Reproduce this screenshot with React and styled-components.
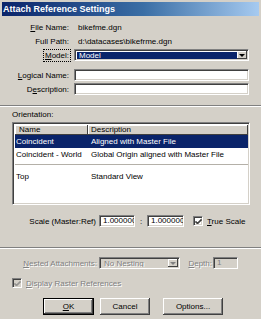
import React from "react";
import styled, { createGlobalStyle } from "styled-components";

const GlobalStyle = createGlobalStyle`
  html, body {
    margin: 0;
    padding: 0;
    background: #d4d0c8;
  }
  body {
    font-family: "Liberation Sans", Arial, sans-serif;
  }
`;

const Window = styled.div`
  width: 261px;
  height: 319px;
  background: #d4d0c8;
  font-size: 8px;
  color: #000;
  overflow: hidden;
  box-sizing: border-box;
  padding-top: 2px;
`;

const TitleBar = styled.div`
  height: 14px;
  margin: 0 2px;
  padding-left: 1px;
  background: linear-gradient(to right, #0a246a 0%, #3a6ea5 55%, #a6caf0 100%);
  color: #fff;
  font-weight: bold;
  font-size: 9px;
  line-height: 14px;
`;

const U = styled.span`
  text-decoration: underline;
`;

const Field = styled.div`
  display: flex;
  align-items: center;
  height: 12px;
  margin-top: ${(p) => p.top || 0}px;
`;

const Label = styled.div`
  width: ${(p) => p.w || 69}px;
  flex: none;
  text-align: right;
  white-space: nowrap;
  color: ${(p) => (p.disabled ? "#808080" : "#000")};
  text-shadow: ${(p) => (p.disabled ? "1px 1px 0 #fff" : "none")};
`;

const Focused = styled.span`
  outline: 1px dotted #000;
  outline-offset: 1px;
`;

const Value = styled.div`
  margin-left: 9px;
  white-space: nowrap;
`;

const sunken = `
  box-sizing: border-box;
  border: 1px solid;
  border-color: #808080 #fff #fff #808080;
  box-shadow: inset 1px 1px 0 #404040, inset -1px -1px 0 #d4d0c8;
`;

const TextBox = styled.div`
  ${sunken}
  margin-left: ${(p) => p.left || 0}px;
  width: ${(p) => p.w}px;
  height: 12px;
  background: ${(p) => (p.disabled ? "#d4d0c8" : "#fff")};
  color: ${(p) => (p.disabled ? "#808080" : "#000")};
  padding: 0 3px;
  line-height: 10px;
  overflow: hidden;
  white-space: nowrap;
`;

const Combo = styled.div`
  ${sunken}
  display: flex;
  align-items: stretch;
  margin-left: ${(p) => p.left || 0}px;
  width: ${(p) => p.w}px;
  height: 12px;
  padding: 2px 1px 1px 2px;
  background: ${(p) => (p.disabled ? "#d4d0c8" : "#fff")};
`;

const ComboText = styled.div`
  flex: 1;
  padding-left: 2px;
  line-height: 8px;
  background: ${(p) => (p.selected ? "#0a246a" : "transparent")};
  color: ${(p) => (p.selected ? "#fff" : p.disabled ? "#808080" : "#000")};
  text-shadow: ${(p) => (p.disabled ? "1px 1px 0 #fff" : "none")};
  white-space: nowrap;
  overflow: hidden;
`;

const ArrowButton = styled.div`
  width: 10px;
  flex: none;
  margin-top: -1px;
  background: #d4d0c8;
  box-shadow: inset -1px -1px 0 #404040, inset 1px 1px 0 #fff;
  display: flex;
  align-items: center;
  justify-content: center;

  &::after {
    content: "";
    border-left: 3px solid transparent;
    border-right: 3px solid transparent;
    border-top: 3px solid ${(p) => (p.disabled ? "#808080" : "#000")};
  }
`;

const Etched = styled.div`
  height: 0;
  border-top: 1px solid #808080;
  border-bottom: 1px solid #fff;
  margin-top: ${(p) => p.top}px;
`;

const Caption = styled.div`
  margin: 2px 0 0 12px;
  height: 12px;
  line-height: 12px;
`;

const List = styled.div`
  ${sunken}
  margin: 1px 0 0 12px;
  width: 238px;
  height: 83px;
  background: #fff;
  padding: 2px 1px 0 2px;
`;

const Grid = styled.div`
  display: grid;
  grid-template-columns: 73px 1fr;
`;

const HeadCell = styled.div`
  height: 10px;
  line-height: 10px;
  padding-left: ${(p) => p.pad}px;
  background: #d4d0c8;
  box-shadow: inset -1px -1px 0 #404040, inset 1px 1px 0 #fff;
  white-space: nowrap;
`;

const Cell = styled.div`
  height: 13px;
  line-height: 13px;
  padding-left: ${(p) => p.pad}px;
  background: ${(p) => (p.selected ? "#0a246a" : "transparent")};
  color: ${(p) => (p.selected ? "#fff" : "#000")};
  white-space: nowrap;
  overflow: hidden;
`;

const GroupLine = styled.div`
  grid-column: 1 / -1;
  height: 0;
  margin: 3px 0 5px;
  border-top: 1px solid #b4b0a8;
`;

const ScaleRow = styled.div`
  display: flex;
  align-items: center;
  height: 12px;
  margin-top: 10px;
`;

const Colon = styled.div`
  width: 12px;
  text-align: center;
`;

const Check = styled.div`
  ${sunken}
  width: 10px;
  height: 10px;
  flex: none;
  margin-left: ${(p) => p.left || 0}px;
  background: ${(p) => (p.disabled ? "#d4d0c8" : "#fff")};
  display: flex;
  align-items: center;
  justify-content: center;
`;

const CheckText = styled.div`
  margin-left: 4px;
  white-space: nowrap;
  color: ${(p) => (p.disabled ? "#808080" : "#000")};
  text-shadow: ${(p) => (p.disabled ? "1px 1px 0 #fff" : "none")};
`;

const RasterRow = styled.div`
  display: flex;
  align-items: center;
  height: 10px;
  margin: 9px 0 0 12px;
`;

const ButtonRow = styled.div`
  display: flex;
  margin: 10px 0 0 43px;
`;

const Button = styled.div`
  box-sizing: border-box;
  width: ${(p) => p.w}px;
  height: 17px;
  margin-left: ${(p) => p.left || 0}px;
  background: #d4d0c8;
  border: ${(p) => (p.primary ? "1px solid #000" : "none")};
  box-shadow: inset -1px -1px 0 #404040, inset 1px 1px 0 #fff,
    inset -2px -2px 0 #808080, inset 2px 2px 0 #d4d0c8;
  display: flex;
  align-items: center;
  justify-content: center;
`;

function Tick({ disabled }) {
  return (
    <svg width="7" height="7" viewBox="0 0 7 7">
      <path
        d="M0.5 3 L2.5 5 L6.5 1 M0.5 4 L2.5 6 L6.5 2"
        stroke={disabled ? "#808080" : "#000"}
        strokeWidth="1"
        fill="none"
      />
    </svg>
  );
}

export default function App() {
  return (
    <>
      <GlobalStyle />
      <Window>
        <TitleBar>Attach Reference Settings</TitleBar>

        <Field top={5}>
          <Label>
            <U>F</U>ile Name:
          </Label>
          <Value>bikefme.dgn</Value>
        </Field>
        <Field top={2}>
          <Label>Full Path:</Label>
          <Value>d:\datacases\bikefrme.dgn</Value>
        </Field>
        <Field top={2}>
          <Label>
            <Focused>
              <U>M</U>odel:
            </Focused>
          </Label>
          <Combo left={5} w={175}>
            <ComboText selected>Model</ComboText>
            <ArrowButton />
          </Combo>
        </Field>
        <Field top={8}>
          <Label>
            <U>L</U>ogical Name:
          </Label>
          <TextBox left={5} w={175} />
        </Field>
        <Field top={2}>
          <Label>
            D<U>e</U>scription:
          </Label>
          <TextBox left={5} w={175} />
        </Field>

        <Etched top={10} />

        <Caption>Orientation:</Caption>
        <List>
          <Grid>
            <HeadCell pad={4}>Name</HeadCell>
            <HeadCell pad={3}>Description</HeadCell>
            <Cell pad={1} selected>
              Coincident
            </Cell>
            <Cell pad={3} selected>
              Aligned with Master File
            </Cell>
            <Cell pad={1}>Coincident - World</Cell>
            <Cell pad={3}>Global Origin aligned with Master File</Cell>
            <GroupLine />
            <Cell pad={1}>Top</Cell>
            <Cell pad={3}>Standard View</Cell>
          </Grid>
        </List>

        <ScaleRow>
          <Label w={96}>Scale (Master:Ref)</Label>
          <TextBox left={3} w={36}>
            1.000000
          </TextBox>
          <Colon>:</Colon>
          <TextBox w={37}>1.000000</TextBox>
          <Check left={9}>
            <Tick />
          </Check>
          <CheckText>
            <U>T</U>rue Scale
          </CheckText>
        </ScaleRow>

        <Etched top={20} />

        <Field top={8}>
          <Label w={97} disabled>
            <U>N</U>ested Attachments:
          </Label>
          <Combo left={2} w={81} disabled>
            <ComboText disabled>No Nesting</ComboText>
            <ArrowButton disabled />
          </Combo>
          <Label w={32} disabled>
            <U>D</U>epth:
          </Label>
          <TextBox left={1} w={25} disabled>
            1
          </TextBox>
        </Field>

        <RasterRow>
          <Check disabled>
            <Tick disabled />
          </Check>
          <CheckText disabled>
            <U>D</U>isplay Raster References
          </CheckText>
        </RasterRow>

        <ButtonRow>
          <Button w={51} primary>
            <U>O</U>K
          </Button>
          <Button w={50} left={6}>
            Cancel
          </Button>
          <Button w={60} left={13}>
            Options...
          </Button>
        </ButtonRow>
      </Window>
    </>
  );
}
